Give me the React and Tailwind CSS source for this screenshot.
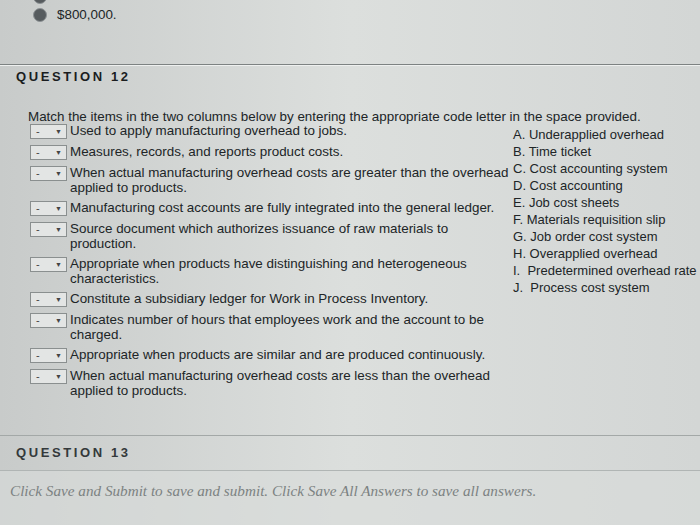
const items = [
  ["Used to apply manufacturing overhead to jobs."],
  ["Measures, records, and reports product costs."],
  ["When actual manufacturing overhead costs are greater than the overhead", "applied to products."],
  ["Manufacturing cost accounts are fully integrated into the general ledger."],
  ["Source document which authorizes issuance of raw materials to", "production."],
  ["Appropriate when products have distinguishing and heterogeneous", "characteristics."],
  ["Constitute a subsidiary ledger for Work in Process Inventory."],
  ["Indicates number of hours that employees work and the account to be", "charged."],
  ["Appropriate when products are similar and are produced continuously."],
  ["When actual manufacturing overhead costs are less than the overhead", "applied to products."],
];

const answers = [
  "A. Underapplied overhead",
  "B. Time ticket",
  "C. Cost accounting system",
  "D. Cost accounting",
  "E. Job cost sheets",
  "F. Materials requisition slip",
  "G. Job order cost system",
  "H. Overapplied overhead",
  "I.\u00a0 Predetermined overhead rate",
  "J.\u00a0 Process cost system",
];

function Radio({ label }) {
  return (
    <div className="flex items-center gap-[10px] h-[18px]">
      <span className="w-[14px] h-[14px] rounded-full bg-[#565b5e] border border-[#8c9194]" />
      {label ? <span>{label}</span> : null}
    </div>
  );
}

function CodeSelect() {
  return (
    <div className="shrink-0 w-[37px] h-[15px] border border-[#8a8f8f] bg-[#e3e5e4] flex items-center justify-between pl-[5px] pr-[4px] text-[11px] leading-none text-[#444]">
      <span>-</span>
      <span className="text-[7px]">▼</span>
    </div>
  );
}

export default function App() {
  return (
    <div className="w-[700px] h-[525px] overflow-hidden bg-gradient-to-r from-[#c8cbca] via-[#dcdfdd] to-[#d3d6d5] text-[#202527] font-['Liberation_Sans',Arial,sans-serif] text-[13.4px]">
      {/* previous question answers */}
      <div className="h-[64px] pl-[33px] flex flex-col">
        <div className="mt-[-12px]">
          <Radio />
        </div>
        <Radio label="$800,000." />
      </div>

      {/* question 12 */}
      <div className="h-[371px] border-t border-[#7d8282] shadow-[inset_0_1px_0_#eef0ef]">
        <div className="pt-[5px] pl-[16px] font-bold text-[13px] tracking-[2.6px] leading-[14px] text-[#1a1d1f]">
          QUESTION 12
        </div>
        <div className="mt-[25px] pl-[28px] leading-[16px]">
          Match the items in the two columns below by entering the appropriate code letter in the space provided.
        </div>
        <div className="flex mt-[-1px]">
          <div className="w-[513px] shrink-0 pl-[30px] flex flex-col gap-[6px]">
            {items.map((lines, i) => (
              <div key={i} className="flex gap-[3px] items-start">
                <CodeSelect />
                <div className="leading-[15px] mt-[-1px] whitespace-nowrap">
                  {lines.map((l, j) => (
                    <div key={j}>{l}</div>
                  ))}
                </div>
              </div>
            ))}
          </div>
          <div className="pt-[2px] leading-[17px] text-[13px] whitespace-nowrap">
            {answers.map((a) => (
              <div key={a}>{a}</div>
            ))}
          </div>
        </div>
      </div>

      {/* question 13 */}
      <div className="h-[35px] border-t border-[#a3a8a7] flex items-center pl-[16px] font-bold text-[13px] tracking-[2.6px] text-[#34393b]">
        QUESTION 13
      </div>
      <div className="h-[55px] border-t border-[#b0b5b4] bg-[#d9dcdb]/60 pt-[9px] pl-[10px] font-['Liberation_Serif',Georgia,serif] italic text-[15.2px] text-[#7c8282]">
        Click Save and Submit to save and submit. Click Save All Answers to save all answers.
      </div>
    </div>
  );
}
